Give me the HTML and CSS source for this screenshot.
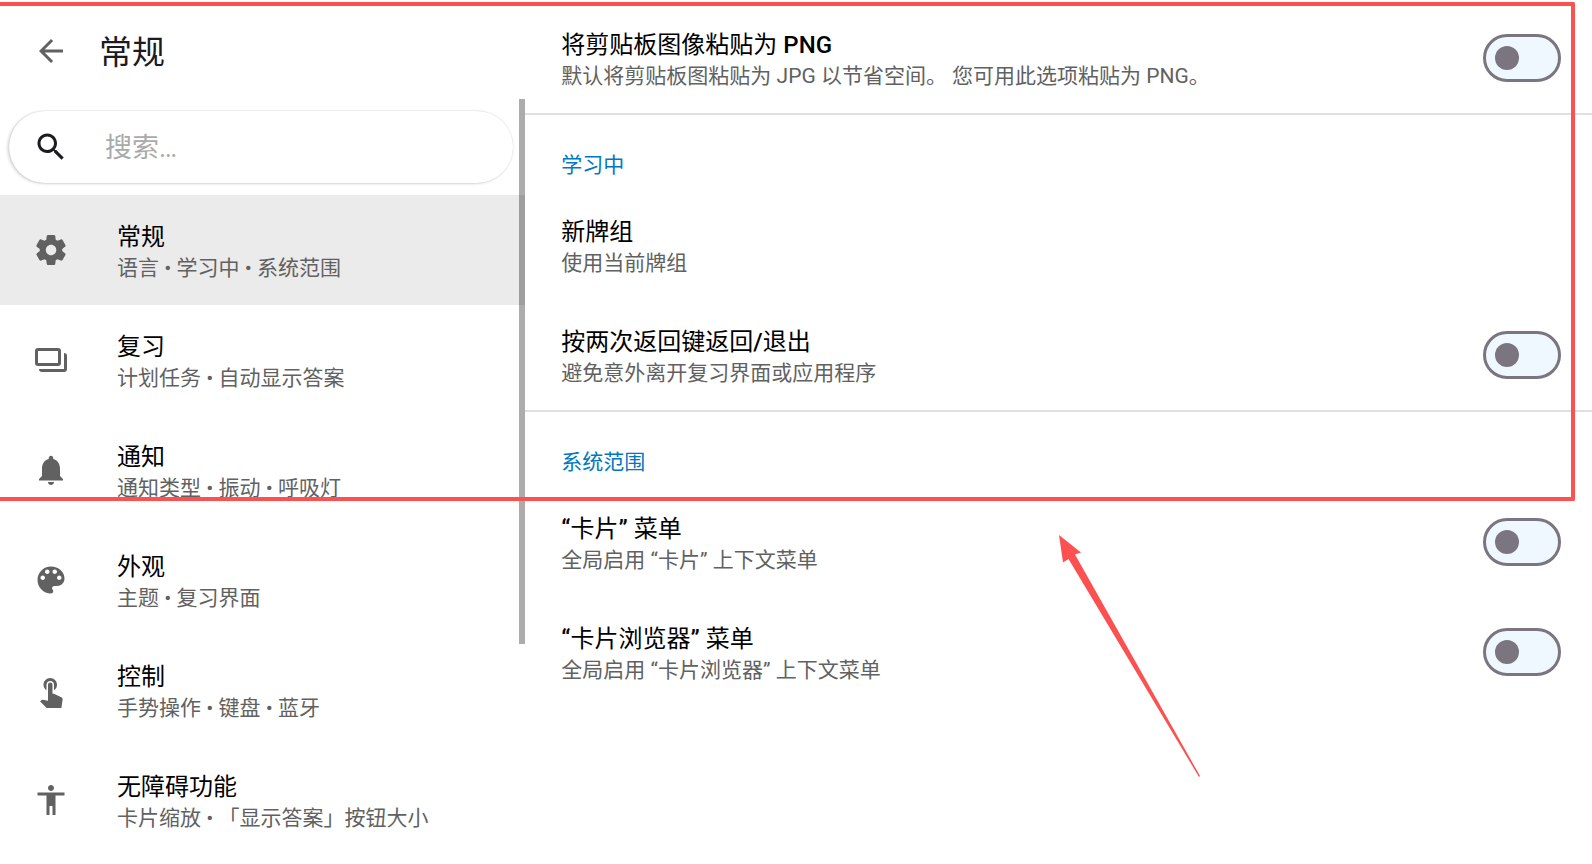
FILE: index.html
```html
<!DOCTYPE html>
<html lang="zh-CN">
<head>
  <meta charset="UTF-8">
  <meta name="viewport" content="width=device-width, initial-scale=1.0">
  <title>常规</title>
  <link rel="stylesheet" href="styles.css">
</head>
<body>
  <div class="settings">
    <aside class="sidebar">
      <header class="topbar">
        <button class="back" type="button" aria-label="返回">
          <svg class="icon" viewBox="0 0 24 24"><path d="M20 11H7.8l5.6-5.6L12 4l-8 8 8 8 1.4-1.4L7.8 13H20z"/></svg>
        </button>
        <h1>常规</h1>
      </header>

      <div class="scroll-area">
        <label class="search">
          <svg class="icon" viewBox="0 0 24 24"><path d="M15.5 14h-.79l-.28-.27C15.41 12.59 16 11.11 16 9.5 16 5.91 13.09 3 9.5 3S3 5.91 3 9.5 5.91 16 9.5 16c1.61 0 3.09-.59 4.23-1.57l.27.28v.79l5 4.99L20.49 19l-4.99-5zm-6 0C7.01 14 5 11.99 5 9.5S7.01 5 9.5 5 14 7.01 14 9.5 11.99 14 9.5 14z"/></svg>
          <input type="text" placeholder="搜索…" aria-label="搜索">
        </label>

        <nav>
          <a class="row active" href="#general">
            <svg class="icon" viewBox="0 0 24 24"><path d="M19.5 12c0-.23-.01-.45-.03-.68l1.86-1.41c.4-.3.51-.86.26-1.3l-1.87-3.23c-.25-.44-.79-.62-1.25-.42l-2.15.91c-.37-.26-.76-.49-1.17-.68l-.29-2.31C14.8 2.38 14.37 2 13.87 2h-3.73c-.51 0-.94.38-1 .88l-.29 2.31c-.41.19-.8.42-1.17.68l-2.15-.91c-.46-.2-1-.02-1.25.42L2.41 8.62c-.25.44-.14.99.26 1.3l1.86 1.41c-.02.22-.03.44-.03.67s.01.45.03.68l-1.86 1.41c-.4.3-.51.86-.26 1.3l1.87 3.23c.25.44.79.62 1.25.42l2.15-.91c.37.26.76.49 1.17.68l.29 2.31c.06.5.49.88.99.88h3.73c.5 0 .93-.38.99-.88l.29-2.31c.41-.19.8-.42 1.17-.68l2.15.91c.46.2 1 .02 1.25-.42l1.87-3.23c.25-.44.14-.99-.26-1.3l-1.86-1.41c.03-.23.04-.45.04-.68zm-7.46 3.5c-1.93 0-3.5-1.57-3.5-3.5s1.57-3.5 3.5-3.5 3.5 1.57 3.5 3.5-1.57 3.5-3.5 3.5z"/></svg>
            <span class="text">
              <span class="title">常规</span>
              <span class="summary">语言 • 学习中 • 系统范围</span>
            </span>
          </a>
          <a class="row" href="#reviewing">
            <svg class="icon" viewBox="0 0 36 36"><path d="M5 6h20a3 3 0 0 1 3 3v12a3 3 0 0 1-3 3H5a3 3 0 0 1-3-3V9a3 3 0 0 1 3-3zm0 3v12h20V9zM31 11a3 3 0 0 1 3 3v13a3 3 0 0 1-3 3H9a3 3 0 0 1-3-3h25z"/></svg>
            <span class="text">
              <span class="title">复习</span>
              <span class="summary">计划任务 • 自动显示答案</span>
            </span>
          </a>
          <a class="row" href="#notifications">
            <svg class="icon" viewBox="0 0 24 24"><path d="M12 22c1.1 0 2-.9 2-2h-4c0 1.1.89 2 2 2zm6-6v-5c0-3.07-1.64-5.64-4.5-6.32V4c0-.83-.67-1.5-1.5-1.5s-1.5.67-1.5 1.5v.68C7.63 5.36 6 7.92 6 11v5l-2 2v1h16v-1l-2-2z"/></svg>
            <span class="text">
              <span class="title">通知</span>
              <span class="summary">通知类型 • 振动 • 呼吸灯</span>
            </span>
          </a>
          <a class="row" href="#appearance">
            <svg class="icon" viewBox="0 0 24 24"><path d="M12 3c-4.97 0-9 4.03-9 9s4.03 9 9 9c.83 0 1.5-.67 1.5-1.5 0-.39-.15-.74-.39-1.01-.23-.26-.38-.61-.38-.99 0-.83.67-1.5 1.5-1.5H16c2.76 0 5-2.24 5-5 0-4.42-4.03-8-9-8zm-5.5 9c-.83 0-1.5-.67-1.5-1.5S5.67 9 6.5 9 8 9.67 8 10.5 7.33 12 6.5 12zm3-4C8.67 8 8 7.33 8 6.5S8.67 5 9.5 5s1.5.67 1.5 1.5S10.33 8 9.5 8zm5 0c-.83 0-1.5-.67-1.5-1.5S13.67 5 14.5 5s1.5.67 1.5 1.5S15.33 8 14.5 8zm3 4c-.83 0-1.5-.67-1.5-1.5S16.67 9 17.5 9s1.5.67 1.5 1.5-.67 1.5-1.5 1.5z"/></svg>
            <span class="text">
              <span class="title">外观</span>
              <span class="summary">主题 • 复习界面</span>
            </span>
          </a>
          <a class="row" href="#controls">
            <svg class="icon" viewBox="0 -1 24 24"><path d="M9 11.24V7.5C9 6.12 10.12 5 11.5 5S14 6.12 14 7.5v3.74c1.21-.81 2-2.18 2-3.74C16 5.01 13.99 3 11.5 3S7 5.01 7 7.5c0 1.56.79 2.93 2 3.74zm9.84 4.63l-4.54-2.26c-.17-.07-.35-.11-.54-.11H13v-6c0-.83-.67-1.5-1.5-1.5S10 6.67 10 7.5v10.74l-3.43-.72c-.08-.01-.15-.03-.24-.03-.31 0-.59.13-.79.33l-.79.8 4.94 4.94c.27.27.65.44 1.06.44h6.79c.75 0 1.33-.55 1.44-1.28l.75-5.27c.01-.07.02-.14.02-.2 0-.62-.38-1.16-.91-1.38z"/></svg>
            <span class="text">
              <span class="title">控制</span>
              <span class="summary">手势操作 • 键盘 • 蓝牙</span>
            </span>
          </a>
          <a class="row" href="#accessibility">
            <svg class="icon" viewBox="0 0 24 24"><path d="M12 2c1.1 0 2 .9 2 2s-.9 2-2 2-2-.9-2-2 .9-2 2-2zm9 7h-6v13h-2v-6h-2v6H9V9H3V7h18v2z"/></svg>
            <span class="text">
              <span class="title">无障碍功能</span>
              <span class="summary">卡片缩放 • 「显示答案」按钮大小</span>
            </span>
          </a>
        </nav>
        <div class="scrollbar"></div>
      </div>
    </aside>

    <main class="content">
      <section>
        <label class="row">
          <span class="text">
            <span class="title">将剪贴板图像粘贴为 <span class="latin">PNG</span></span>
            <span class="summary">默认将剪贴板图粘贴为 JPG 以节省空间。 您可用此选项粘贴为 PNG。</span>
          </span>
          <input class="switch" type="checkbox">
        </label>
      </section>

      <section>
        <h2>学习中</h2>
        <button class="row" type="button">
          <span class="text">
            <span class="title">新牌组</span>
            <span class="summary">使用当前牌组</span>
          </span>
        </button>
        <label class="row">
          <span class="text">
            <span class="title">按两次返回键返回<span class="latin">/</span>退出</span>
            <span class="summary">避免意外离开复习界面或应用程序</span>
          </span>
          <input class="switch" type="checkbox">
        </label>
      </section>

      <section>
        <h2>系统范围</h2>
        <label class="row">
          <span class="text">
            <span class="title"><span class="latin">“</span>卡片<span class="latin">”</span> 菜单</span>
            <span class="summary">全局启用 “卡片” 上下文菜单</span>
          </span>
          <input class="switch" type="checkbox">
        </label>
        <label class="row">
          <span class="text">
            <span class="title"><span class="latin">“</span>卡片浏览器<span class="latin">”</span> 菜单</span>
            <span class="summary">全局启用 “卡片浏览器” 上下文菜单</span>
          </span>
          <input class="switch" type="checkbox">
        </label>
      </section>
    </main>
  </div>

  <!-- annotations drawn over the page -->
  <div class="mark-frame"></div>
  <svg class="mark-arrow" viewBox="0 0 141 242"><path d="M0 0l22 17.500-6 2L141 241l-1 1L9.500 24 4 27.500z"/></svg>
</body>
</html>
```

FILE: styles.css
```css
* {
  box-sizing: border-box;
}
body {
  position: relative;
  margin: 0;
  background: #fff;
  color: #000;
  font-family: Roboto, "Noto Sans CJK SC", sans-serif;
}
h1, h2 {
  margin: 0;
  font-weight: 400;
}
.settings {
  display: flex;
  min-height: 100vh;
}
.sidebar {
  width: 33%;
  flex-shrink: 0;
}
.content {
  flex: 1;
  padding-top: 3px;
}
.icon {
  width: 36px;
  height: 36px;
  flex-shrink: 0;
  fill: #616161;
}

/* top bar and search */
.topbar {
  display: flex;
  align-items: center;
  gap: 30px;
  height: 99px;
  padding: 3px 33px 0;
}
.back {
  display: flex;
  padding: 0;
  border: none;
  background: none;
}
h1 {
  padding-top: 3px;
  color: #1c1b1f;
  font-size: 33px;
  line-height: 48px;
}
.scroll-area {
  position: relative;
}
.search {
  display: flex;
  align-items: center;
  gap: 36px;
  height: 96px;
  padding: 0 24px;
  margin: 0 12px 0 9px;
  position: relative;
}
.search::before {
  content: "";
  position: absolute;
  inset: 12px 0;
  border-radius: 36px;
  box-shadow: 0 0 2px rgba(0,0,0,0.2), -2px 1px 3px rgba(0,0,0,0.12);
  background: #fff;
  z-index: -1;
}
.search .icon {
  fill: #1c1b1f;
}
.search input {
  flex: 1;
  min-width: 0;
  padding: 2px 0 0;
  border: none;
  outline: none;
  background: none;
  font-family: inherit;
  font-size: 27px;
}
.search input::placeholder {
  color: #aaa;
}
.scrollbar {
  position: absolute;
  top: 0;
  right: 0;
  width: 6px;
  height: 545px;
  background: rgba(0,0,0,0.325);
}

/* preference rows */
.row {
  display: flex;
  align-items: center;
  width: 100%;
  min-height: 110px;
  padding: 0 31px 0 36px;
  border: none;
  background: none;
  color: inherit;
  font-family: inherit;
  text-align: left;
  text-decoration: none;
}
.sidebar .row {
  gap: 48px;
  padding: 0 24px 0 33px;
}
.row.active {
  background: #ebebeb;
}
.text {
  flex: 1;
  padding-top: 4px;
}
.title {
  display: block;
  font-size: 24px;
  line-height: 32px;
}
.title .latin {
  font-weight: 500;
}
.summary {
  display: block;
  color: #616161;
  font-size: 21px;
  line-height: 30px;
}
section + section {
  border-top: 2px solid #e0e0e0;
}
h2 {
  height: 75px;
  padding: 34px 36px 0;
  color: #0077c2;
  font-size: 21px;
  line-height: 32px;
}
.switch {
  appearance: none;
  display: flex;
  align-items: center;
  width: 78px;
  height: 48px;
  margin: 0;
  padding: 0 9px;
  border: 3px solid #7a757f;
  border-radius: 24px;
  background: #f0f8ff;
}
.switch::before {
  content: "";
  width: 24px;
  height: 24px;
  border-radius: 50%;
  background: #7a757f;
}
.switch:checked {
  justify-content: flex-end;
}

.mark-frame {
  position: absolute;
  top: 2px;
  left: 0;
  right: 17px;
  height: 499px;
  border: 4px solid #fb5151;
  border-left: none;
  border-radius: 0 2px 2px 0;
  pointer-events: none;
}
.mark-arrow {
  position: absolute;
  top: 535px;
  left: 1059px;
  width: 141px;
  height: 242px;
  fill: #fb5151;
  pointer-events: none;
}
```
